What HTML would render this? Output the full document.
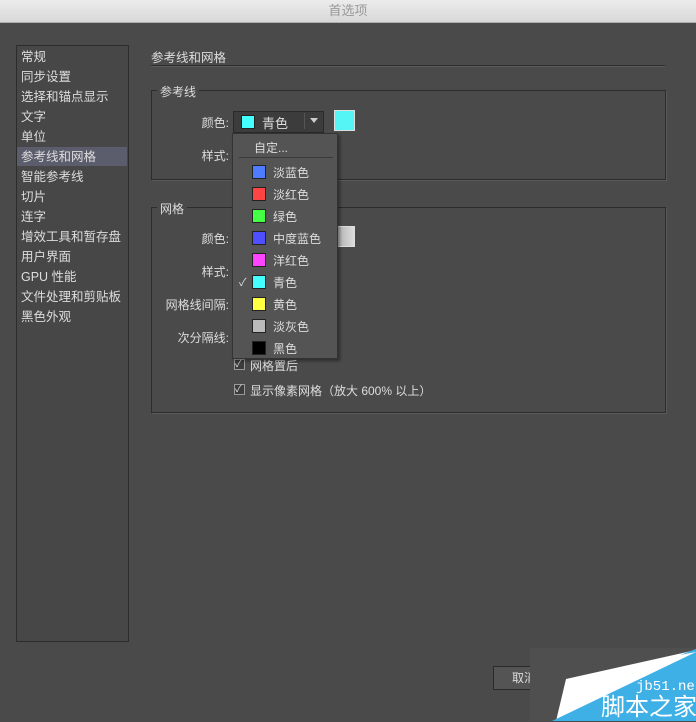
<html><head><style>
body{margin:0;width:696px;height:721px;background:#4a4a4a;font-family:"Liberation Sans","Noto Sans CJK SC",sans-serif;font-size:12px;color:#ddd;position:relative;overflow:hidden}
.a{position:absolute;white-space:nowrap}
.title{left:0;top:0;width:696px;height:22px;background:linear-gradient(#ececec,#d8d8d8);color:#999;text-align:center;line-height:22px;font-size:13px;border-bottom:1px solid #b0b0b0}
.left{left:16px;top:45px;width:111px;height:595px;background:#474747;border:1px solid #2c2c2c}
.li{left:21px;height:20px;line-height:20px;font-size:12.5px}
.box{border:1px solid #2c2c2c;box-shadow:1px 1px 0 #5a5a5a}
.lab{text-align:right;width:80px}
.sw{width:12px;height:12px;border:1px solid #222}
.menu{left:232px;top:133px;width:104px;height:224px;background:#545454;border:1px solid #333;box-shadow:2px 2px 3px rgba(0,0,0,.4)}
.mi{left:40px;font-size:12px}
.ms{left:19px;width:12px;height:12px;border:1px solid #222}
.cb{width:9px;height:9px;border:1px solid #999;background:#3c3c3c;color:#ddd;font-size:10px;line-height:9px}
</style></head><body>
<div class="a title">首选项</div>
<div class="a left"></div>
<div class="a" style="left:17px;top:147px;width:110px;height:19px;background:#5b5d6c"></div>
<div class="a li" style="top:47px">常规</div>
<div class="a li" style="top:67px">同步设置</div>
<div class="a li" style="top:87px">选择和锚点显示</div>
<div class="a li" style="top:107px">文字</div>
<div class="a li" style="top:127px">单位</div>
<div class="a li" style="top:147px">参考线和网格</div>
<div class="a li" style="top:167px">智能参考线</div>
<div class="a li" style="top:187px">切片</div>
<div class="a li" style="top:207px">连字</div>
<div class="a li" style="top:227px">增效工具和暂存盘</div>
<div class="a li" style="top:247px">用户界面</div>
<div class="a li" style="top:267px">GPU 性能</div>
<div class="a li" style="top:287px">文件处理和剪贴板</div>
<div class="a li" style="top:307px">黑色外观</div>

<div class="a" style="left:151px;top:47px;font-size:12.5px">参考线和网格</div>
<div class="a" style="left:151px;top:65px;width:514px;height:1px;background:#2e2e2e;box-shadow:0 1px 0 #5a5a5a"></div>

<div class="a box" style="left:151px;top:90px;width:513px;height:88px"></div>
<div class="a" style="left:157px;top:83px;background:#4a4a4a;padding:0 3px">参考线</div>
<div class="a lab" style="left:149px;top:114px">颜色:</div>
<div class="a" style="left:233px;top:111px;width:89px;height:20px;background:#3c3c3c;border:1px solid #2a2a2a"></div>
<div class="a sw" style="left:241px;top:115px;background:#4ff"></div>
<div class="a" style="left:262px;top:113px;font-size:13px">青色</div>
<div class="a" style="left:304px;top:113px;width:1px;height:16px;background:#555"></div>
<svg class="a" style="left:310px;top:118px" width="8" height="6"><polygon points="0,0 8,0 4,5" fill="#ccc"/></svg>
<div class="a" style="left:334px;top:110px;width:19px;height:19px;background:#55f5f5;border:1px solid #ddd"></div>
<div class="a lab" style="left:149px;top:147px">样式:</div>

<div class="a box" style="left:151px;top:207px;width:513px;height:204px"></div>
<div class="a" style="left:157px;top:200px;background:#4a4a4a;padding:0 3px">网格</div>
<div class="a lab" style="left:149px;top:230px">颜色:</div>
<div class="a" style="left:334px;top:226px;width:19px;height:19px;background:linear-gradient(90deg,#aaa,#ddd);border:1px solid #ddd"></div>
<div class="a lab" style="left:149px;top:263px">样式:</div>
<div class="a lab" style="left:149px;top:296px">网格线间隔:</div>
<div class="a lab" style="left:149px;top:329px">次分隔线:</div>
<div class="a cb" style="left:234px;top:359px">✓</div>
<div class="a" style="left:250px;top:357px">网格置后</div>
<div class="a cb" style="left:234px;top:384px">✓</div>
<div class="a" style="left:250px;top:382px">显示像素网格（放大 600% 以上）</div>

<div class="a menu">
<div class="a" style="left:21px;top:5px">自定...</div>
<div class="a" style="left:6px;top:23px;width:94px;height:1px;background:#3a3a3a"></div>
<div class="a ms" style="top:31px;background:#4f7bff"></div><div class="a mi" style="top:30px">淡蓝色</div>
<div class="a ms" style="top:53px;background:#f44"></div><div class="a mi" style="top:52px">淡红色</div>
<div class="a ms" style="top:75px;background:#4f4"></div><div class="a mi" style="top:74px">绿色</div>
<div class="a ms" style="top:97px;background:#4f4fff"></div><div class="a mi" style="top:96px">中度蓝色</div>
<div class="a ms" style="top:119px;background:#f4f"></div><div class="a mi" style="top:118px">洋红色</div>
<div class="a" style="left:6px;top:140px;font-size:11px">✓</div>
<div class="a ms" style="top:141px;background:#4ff"></div><div class="a mi" style="top:140px">青色</div>
<div class="a ms" style="top:163px;background:#ff4"></div><div class="a mi" style="top:162px">黄色</div>
<div class="a ms" style="top:185px;background:#bbb"></div><div class="a mi" style="top:184px">淡灰色</div>
<div class="a ms" style="top:207px;background:#000"></div><div class="a mi" style="top:206px">黑色</div>
</div>

<div class="a" style="left:493px;top:666px;width:60px;height:22px;background:#545454;border:1px solid #2a2a2a;text-align:center;line-height:22px">取消</div>
<div class="a" style="left:530px;top:648px;width:166px;height:73px;background:#4f4f4f"></div>
<div class="a" style="left:530px;top:646px;width:166px;height:75px;background:#fff;clip-path:polygon(36px 33px,166px 4px,166px 75px,26px 75px)"></div>
<div class="a" style="left:530px;top:646px;width:166px;height:75px;background:#3fb0e6;clip-path:polygon(22px 75px,166px 6px,166px 75px)"></div>
<div class="a" style="left:530px;top:646px;width:166px;height:75px;background:#3fb0e6;clip-path:polygon(150px 9px,166px 3px,166px 6px)"></div>
<div class="a" style="left:636px;top:679px;color:#fff;font-family:'Liberation Mono',monospace;font-size:14px">jb51.net</div>
<div class="a" style="left:601px;top:694px;color:#fff;font-size:24px;line-height:28px">脚本之家</div>
</body></html>
